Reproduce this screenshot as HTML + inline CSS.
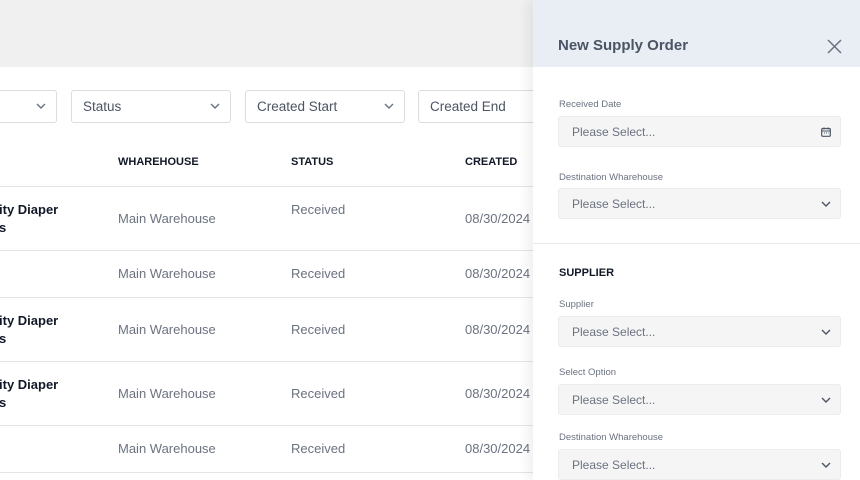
<!DOCTYPE html>
<html><head><style>
*{margin:0;padding:0;box-sizing:border-box}
body{width:860px;height:480px;overflow:hidden;position:relative;background:#fff;font-family:"Liberation Sans",Arial,sans-serif;}
.top{position:absolute;left:0;top:0;width:860px;height:67px;background:#f0f0f0}
.f{position:absolute;top:90px;height:33px;border:1px solid #dcdde0;border-radius:3px;font-size:13.5px;color:#4b5563;padding:8px 11px}
.chev{position:absolute;right:10px;top:12px}
.th{position:absolute;top:156px;font-size:11px;font-weight:bold;color:#111827}
.line{position:absolute;left:0;width:533px;height:1px;background:#e3e4e7}
.c{position:absolute;font-size:13px;color:#6b7280}
.b{position:absolute;font-size:13px;color:#111827;font-weight:bold;line-height:18px}
.panel{position:absolute;left:533px;top:0;width:327px;height:480px;background:#fff;box-shadow:-6px 0 10px rgba(0,0,0,.06)}
.ph{height:67px;background:#e9eef5;position:relative}
.ph h1{position:absolute;left:25px;top:37px;font-size:15px;color:#4b5563;font-weight:bold}
.lb{position:absolute;left:26px;font-size:9.5px;color:#6b7280}
.in{position:absolute;left:25px;width:283px;height:31px;background:#f5f5f5;border:1px solid #ececec;border-radius:3px;font-size:12px;color:#6b7280;padding:8px 13px}
.in svg{position:absolute;right:9px;top:12px}
</style></head><body>
<div class="top"></div>
<div class="f" style="left:-10px;width:67px"><svg class="chev" width="10" height="6" viewBox="0 0 10 6"><path d="M1 1l4 4 4-4" stroke="#6b7280" stroke-width="1.4" fill="none"/></svg></div>
<div class="f" style="left:71px;width:160px">Status<svg class="chev" width="10" height="6" viewBox="0 0 10 6"><path d="M1 1l4 4 4-4" stroke="#6b7280" stroke-width="1.4" fill="none"/></svg></div>
<div class="f" style="left:245px;width:160px">Created Start<svg class="chev" width="10" height="6" viewBox="0 0 10 6"><path d="M1 1l4 4 4-4" stroke="#6b7280" stroke-width="1.4" fill="none"/></svg></div>
<div class="f" style="left:418px;width:160px">Created End</div>
<div class="th" style="left:118px">WHAREHOUSE</div>
<div class="th" style="left:291px">STATUS</div>
<div class="th" style="left:465px">CREATED</div>
<div class="line" style="top:186px"></div>
<div class="line" style="top:250px"></div>
<div class="line" style="top:297px"></div>
<div class="line" style="top:361px"></div>
<div class="line" style="top:425px"></div>
<div class="line" style="top:472px"></div>
<div class="b" style="left:-1px;top:201px">ity Diaper<br>s</div>
<div class="c" style="left:118px;top:211px">Main Warehouse</div><div class="c" style="left:291px;top:202px">Received</div><div class="c" style="left:465px;top:211px">08/30/2024</div>
<div class="c" style="left:118px;top:266px">Main Warehouse</div><div class="c" style="left:291px;top:266px">Received</div><div class="c" style="left:465px;top:266px">08/30/2024</div>
<div class="b" style="left:-1px;top:312px">ity Diaper<br>s</div>
<div class="c" style="left:118px;top:322px">Main Warehouse</div><div class="c" style="left:291px;top:322px">Received</div><div class="c" style="left:465px;top:322px">08/30/2024</div>
<div class="b" style="left:-1px;top:376px">ity Diaper<br>s</div>
<div class="c" style="left:118px;top:386px">Main Warehouse</div><div class="c" style="left:291px;top:386px">Received</div><div class="c" style="left:465px;top:386px">08/30/2024</div>
<div class="c" style="left:118px;top:441px">Main Warehouse</div><div class="c" style="left:291px;top:441px">Received</div><div class="c" style="left:465px;top:441px">08/30/2024</div>
<div class="panel">
<div class="ph"><h1>New Supply Order</h1><svg style="position:absolute;left:294px;top:39px" width="15" height="15" viewBox="0 0 15 15"><path d="M1 1l13 13M14 1L1 14" stroke="#6b7280" stroke-width="1.5"/></svg></div>
<div class="lb" style="top:99px">Received Date</div>
<div class="in" style="top:116px">Please Select...<svg width="10" height="10" viewBox="0 0 10 10" style="top:10px"><rect x="0.7" y="1.5" width="8.6" height="7.8" rx="1" fill="none" stroke="#4b5563" stroke-width="1.2"/><path d="M1 4h8M3 0.5v2M7 0.5v2M3 6h1M5 6h1M7 6h.5" stroke="#4b5563" stroke-width="1.1"/></svg></div>
<div class="lb" style="top:172px">Destination Wharehouse</div>
<div class="in" style="top:188px">Please Select...<svg width="10" height="6" viewBox="0 0 10 6"><path d="M1 1l4 4 4-4" stroke="#4b5563" stroke-width="1.4" fill="none"/></svg></div>
<div style="position:absolute;left:0;top:243px;width:327px;height:1px;background:#e9eaec"></div>
<div style="position:absolute;left:26px;top:267px;font-size:11px;font-weight:bold;color:#111827">SUPPLIER</div>
<div class="lb" style="top:299px">Supplier</div>
<div class="in" style="top:316px">Please Select...<svg width="10" height="6" viewBox="0 0 10 6"><path d="M1 1l4 4 4-4" stroke="#4b5563" stroke-width="1.4" fill="none"/></svg></div>
<div class="lb" style="top:367px">Select Option</div>
<div class="in" style="top:384px">Please Select...<svg width="10" height="6" viewBox="0 0 10 6"><path d="M1 1l4 4 4-4" stroke="#4b5563" stroke-width="1.4" fill="none"/></svg></div>
<div class="lb" style="top:432px">Destination Wharehouse</div>
<div class="in" style="top:449px">Please Select...<svg width="10" height="6" viewBox="0 0 10 6"><path d="M1 1l4 4 4-4" stroke="#4b5563" stroke-width="1.4" fill="none"/></svg></div>
</div>
</body></html>
